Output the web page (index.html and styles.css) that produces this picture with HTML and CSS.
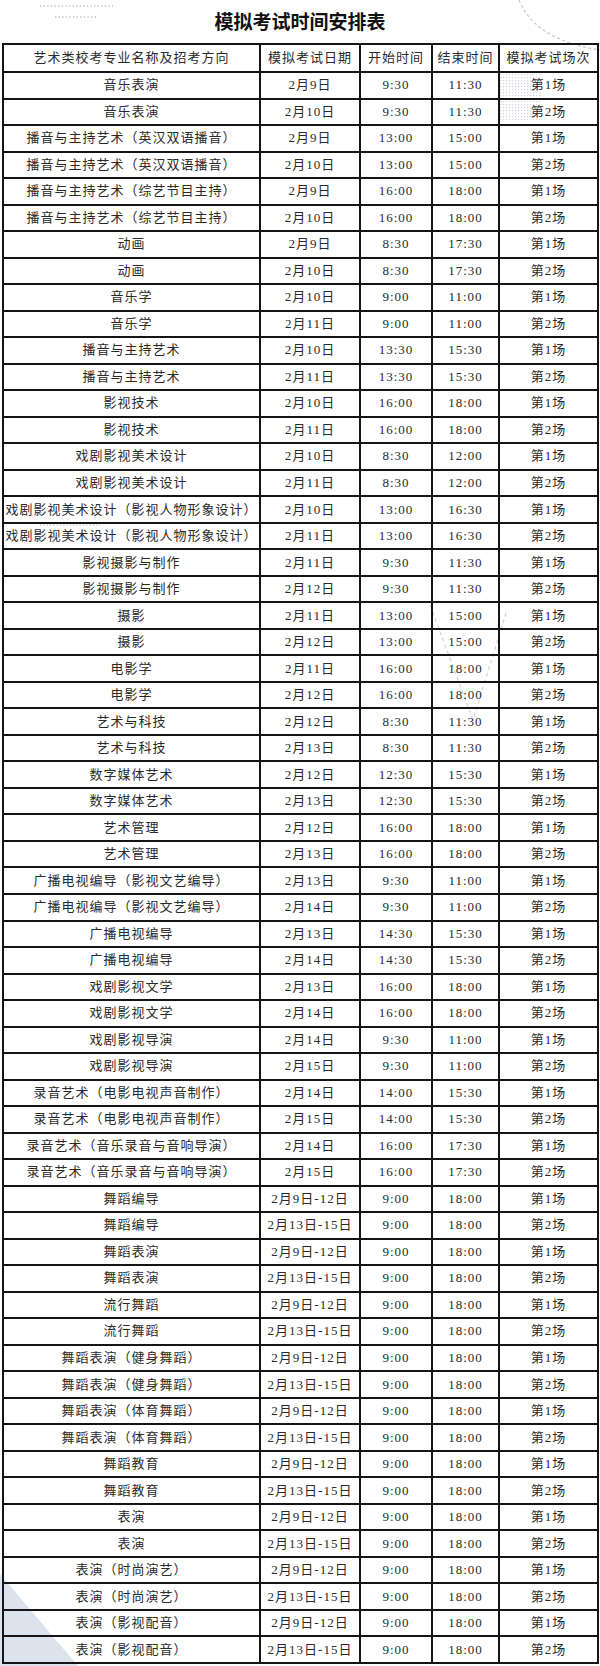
FILE: index.html
```html
<!DOCTYPE html>
<html lang="zh-CN">
<head>
<meta charset="utf-8">
<title>模拟考试时间安排表</title>
<link rel="stylesheet" href="styles.css">
</head>
<body>
<div class="page">
  <svg class="deco deco-top" width="600" height="60" viewBox="0 0 600 60" aria-hidden="true">
    <line x1="40" y1="6" x2="113" y2="6" stroke="#c4c4c4" stroke-width="1.6" stroke-dasharray="1.4 2.2"/>
    <line x1="55" y1="17" x2="97" y2="17" stroke="#c4c4c4" stroke-width="1.6" stroke-dasharray="1.4 2.2"/>
    <path d="M519 0 Q 535 40 600 50" fill="none" stroke="#c8c8c8" stroke-width="1.2" stroke-dasharray="3 2.5"/>
  </svg>
  <svg class="deco deco-grid" width="40" height="46" viewBox="0 0 40 46" aria-hidden="true">
    <defs>
      <pattern id="dots" width="3" height="3" patternUnits="userSpaceOnUse">
        <rect width="1.2" height="1.2" fill="#cfd6de"/>
      </pattern>
    </defs>
    <rect width="40" height="46" fill="url(#dots)"/>
  </svg>
  <svg class="deco deco-mid" width="110" height="40" viewBox="0 0 110 40" aria-hidden="true">
    <line x1="40" y1="3" x2="100" y2="3" stroke="#cfcfcf" stroke-width="1.4" stroke-dasharray="1.3 2"/>
    <line x1="40" y1="31" x2="100" y2="31" stroke="#cfcfcf" stroke-width="1.4" stroke-dasharray="1.3 2"/>
  </svg>
  <svg class="deco deco-v" width="90" height="130" viewBox="0 0 90 130" aria-hidden="true">
    <path d="M5 5 L 48 120 L 82 10" fill="none" stroke="#d4d4d4" stroke-width="1.2" stroke-dasharray="4 3"/>
  </svg>
  <svg class="deco deco-corner" width="120" height="92" viewBox="0 0 120 92" aria-hidden="true">
    <polygon points="0,0 78,92 0,92" fill="#dce3ec"/>
  </svg>

  <h1 class="title">模拟考试时间安排表</h1>

  <table class="schedule">
    <colgroup>
      <col class="c-name"><col class="c-date"><col class="c-start"><col class="c-end"><col class="c-session">
    </colgroup>
    <thead>
      <tr><th>艺术类校考专业名称及招考方向</th><th>模拟考试日期</th><th>开始时间</th><th>结束时间</th><th>模拟考试场次</th></tr>
    </thead>
    <tbody>
      <tr><td>音乐表演</td><td>2月9日</td><td>9:30</td><td>11:30</td><td>第1场</td></tr>
      <tr><td>音乐表演</td><td>2月10日</td><td>9:30</td><td>11:30</td><td>第2场</td></tr>
      <tr><td>播音与主持艺术（英汉双语播音）</td><td>2月9日</td><td>13:00</td><td>15:00</td><td>第1场</td></tr>
      <tr><td>播音与主持艺术（英汉双语播音）</td><td>2月10日</td><td>13:00</td><td>15:00</td><td>第2场</td></tr>
      <tr><td>播音与主持艺术（综艺节目主持）</td><td>2月9日</td><td>16:00</td><td>18:00</td><td>第1场</td></tr>
      <tr><td>播音与主持艺术（综艺节目主持）</td><td>2月10日</td><td>16:00</td><td>18:00</td><td>第2场</td></tr>
      <tr><td>动画</td><td>2月9日</td><td>8:30</td><td>17:30</td><td>第1场</td></tr>
      <tr><td>动画</td><td>2月10日</td><td>8:30</td><td>17:30</td><td>第2场</td></tr>
      <tr><td>音乐学</td><td>2月10日</td><td>9:00</td><td>11:00</td><td>第1场</td></tr>
      <tr><td>音乐学</td><td>2月11日</td><td>9:00</td><td>11:00</td><td>第2场</td></tr>
      <tr><td>播音与主持艺术</td><td>2月10日</td><td>13:30</td><td>15:30</td><td>第1场</td></tr>
      <tr><td>播音与主持艺术</td><td>2月11日</td><td>13:30</td><td>15:30</td><td>第2场</td></tr>
      <tr><td>影视技术</td><td>2月10日</td><td>16:00</td><td>18:00</td><td>第1场</td></tr>
      <tr><td>影视技术</td><td>2月11日</td><td>16:00</td><td>18:00</td><td>第2场</td></tr>
      <tr><td>戏剧影视美术设计</td><td>2月10日</td><td>8:30</td><td>12:00</td><td>第1场</td></tr>
      <tr><td>戏剧影视美术设计</td><td>2月11日</td><td>8:30</td><td>12:00</td><td>第2场</td></tr>
      <tr><td>戏剧影视美术设计（影视人物形象设计）</td><td>2月10日</td><td>13:00</td><td>16:30</td><td>第1场</td></tr>
      <tr><td>戏剧影视美术设计（影视人物形象设计）</td><td>2月11日</td><td>13:00</td><td>16:30</td><td>第2场</td></tr>
      <tr><td>影视摄影与制作</td><td>2月11日</td><td>9:30</td><td>11:30</td><td>第1场</td></tr>
      <tr><td>影视摄影与制作</td><td>2月12日</td><td>9:30</td><td>11:30</td><td>第2场</td></tr>
      <tr><td>摄影</td><td>2月11日</td><td>13:00</td><td>15:00</td><td>第1场</td></tr>
      <tr><td>摄影</td><td>2月12日</td><td>13:00</td><td>15:00</td><td>第2场</td></tr>
      <tr><td>电影学</td><td>2月11日</td><td>16:00</td><td>18:00</td><td>第1场</td></tr>
      <tr><td>电影学</td><td>2月12日</td><td>16:00</td><td>18:00</td><td>第2场</td></tr>
      <tr><td>艺术与科技</td><td>2月12日</td><td>8:30</td><td>11:30</td><td>第1场</td></tr>
      <tr><td>艺术与科技</td><td>2月13日</td><td>8:30</td><td>11:30</td><td>第2场</td></tr>
      <tr><td>数字媒体艺术</td><td>2月12日</td><td>12:30</td><td>15:30</td><td>第1场</td></tr>
      <tr><td>数字媒体艺术</td><td>2月13日</td><td>12:30</td><td>15:30</td><td>第2场</td></tr>
      <tr><td>艺术管理</td><td>2月12日</td><td>16:00</td><td>18:00</td><td>第1场</td></tr>
      <tr><td>艺术管理</td><td>2月13日</td><td>16:00</td><td>18:00</td><td>第2场</td></tr>
      <tr><td>广播电视编导（影视文艺编导）</td><td>2月13日</td><td>9:30</td><td>11:00</td><td>第1场</td></tr>
      <tr><td>广播电视编导（影视文艺编导）</td><td>2月14日</td><td>9:30</td><td>11:00</td><td>第2场</td></tr>
      <tr><td>广播电视编导</td><td>2月13日</td><td>14:30</td><td>15:30</td><td>第1场</td></tr>
      <tr><td>广播电视编导</td><td>2月14日</td><td>14:30</td><td>15:30</td><td>第2场</td></tr>
      <tr><td>戏剧影视文学</td><td>2月13日</td><td>16:00</td><td>18:00</td><td>第1场</td></tr>
      <tr><td>戏剧影视文学</td><td>2月14日</td><td>16:00</td><td>18:00</td><td>第2场</td></tr>
      <tr><td>戏剧影视导演</td><td>2月14日</td><td>9:30</td><td>11:00</td><td>第1场</td></tr>
      <tr><td>戏剧影视导演</td><td>2月15日</td><td>9:30</td><td>11:00</td><td>第2场</td></tr>
      <tr><td>录音艺术（电影电视声音制作）</td><td>2月14日</td><td>14:00</td><td>15:30</td><td>第1场</td></tr>
      <tr><td>录音艺术（电影电视声音制作）</td><td>2月15日</td><td>14:00</td><td>15:30</td><td>第2场</td></tr>
      <tr><td>录音艺术（音乐录音与音响导演）</td><td>2月14日</td><td>16:00</td><td>17:30</td><td>第1场</td></tr>
      <tr><td>录音艺术（音乐录音与音响导演）</td><td>2月15日</td><td>16:00</td><td>17:30</td><td>第2场</td></tr>
      <tr><td>舞蹈编导</td><td>2月9日-12日</td><td>9:00</td><td>18:00</td><td>第1场</td></tr>
      <tr><td>舞蹈编导</td><td>2月13日-15日</td><td>9:00</td><td>18:00</td><td>第2场</td></tr>
      <tr><td>舞蹈表演</td><td>2月9日-12日</td><td>9:00</td><td>18:00</td><td>第1场</td></tr>
      <tr><td>舞蹈表演</td><td>2月13日-15日</td><td>9:00</td><td>18:00</td><td>第2场</td></tr>
      <tr><td>流行舞蹈</td><td>2月9日-12日</td><td>9:00</td><td>18:00</td><td>第1场</td></tr>
      <tr><td>流行舞蹈</td><td>2月13日-15日</td><td>9:00</td><td>18:00</td><td>第2场</td></tr>
      <tr><td>舞蹈表演（健身舞蹈）</td><td>2月9日-12日</td><td>9:00</td><td>18:00</td><td>第1场</td></tr>
      <tr><td>舞蹈表演（健身舞蹈）</td><td>2月13日-15日</td><td>9:00</td><td>18:00</td><td>第2场</td></tr>
      <tr><td>舞蹈表演（体育舞蹈）</td><td>2月9日-12日</td><td>9:00</td><td>18:00</td><td>第1场</td></tr>
      <tr><td>舞蹈表演（体育舞蹈）</td><td>2月13日-15日</td><td>9:00</td><td>18:00</td><td>第2场</td></tr>
      <tr><td>舞蹈教育</td><td>2月9日-12日</td><td>9:00</td><td>18:00</td><td>第1场</td></tr>
      <tr><td>舞蹈教育</td><td>2月13日-15日</td><td>9:00</td><td>18:00</td><td>第2场</td></tr>
      <tr><td>表演</td><td>2月9日-12日</td><td>9:00</td><td>18:00</td><td>第1场</td></tr>
      <tr><td>表演</td><td>2月13日-15日</td><td>9:00</td><td>18:00</td><td>第2场</td></tr>
      <tr><td>表演（时尚演艺）</td><td>2月9日-12日</td><td>9:00</td><td>18:00</td><td>第1场</td></tr>
      <tr><td>表演（时尚演艺）</td><td>2月13日-15日</td><td>9:00</td><td>18:00</td><td>第2场</td></tr>
      <tr><td>表演（影视配音）</td><td>2月9日-12日</td><td>9:00</td><td>18:00</td><td>第1场</td></tr>
      <tr><td>表演（影视配音）</td><td>2月13日-15日</td><td>9:00</td><td>18:00</td><td>第2场</td></tr>
    </tbody>
  </table>
</div>
</body>
</html>
```

FILE: styles.css
```css
html, body {
  margin: 0;
  padding: 0;
  background: #ffffff;
}

.page {
  position: relative;
  width: 600px;
  min-height: 1666px;
  overflow: hidden;
}

.deco {
  position: absolute;
  z-index: 0;
  pointer-events: none;
}
.deco-top { left: 0; top: 0; }
.deco-grid { left: 500px; top: 74px; }
.deco-mid { left: 0; top: 494px; }
.deco-v { left: 425px; top: 600px; }
.deco-corner { left: 0; top: 1574px; }

.title {
  position: relative;
  z-index: 1;
  margin: 0;
  height: 43px;
  padding-top: 8px;
  box-sizing: border-box;
  text-align: center;
  font-family: "Noto Sans CJK SC", sans-serif;
  font-size: 19px;
  font-weight: 700;
  line-height: 26px;
  color: #111111;
}

.schedule {
  position: relative;
  z-index: 1;
  margin-left: 2px;
  width: 595px;
  table-layout: fixed;
  border-collapse: collapse;
  font-family: "Liberation Serif", "Noto Sans CJK SC", serif;
  font-size: 13px;
  color: #2a2a2a;
  background: transparent;
}

.c-name { width: 257px; }
.c-date { width: 100px; }
.c-start { width: 72px; }
.c-end { width: 67px; }
.c-session { width: 99px; }

.schedule th,
.schedule td {
  border: 2px solid #151515;
  padding: 0;
  text-align: center;
  vertical-align: middle;
  white-space: nowrap;
  overflow: hidden;
  letter-spacing: 1px;
  font-weight: 400;
  line-height: 16px;
}

.schedule thead tr { height: 28px; }
.schedule tbody tr { height: 26.53px; }
```
